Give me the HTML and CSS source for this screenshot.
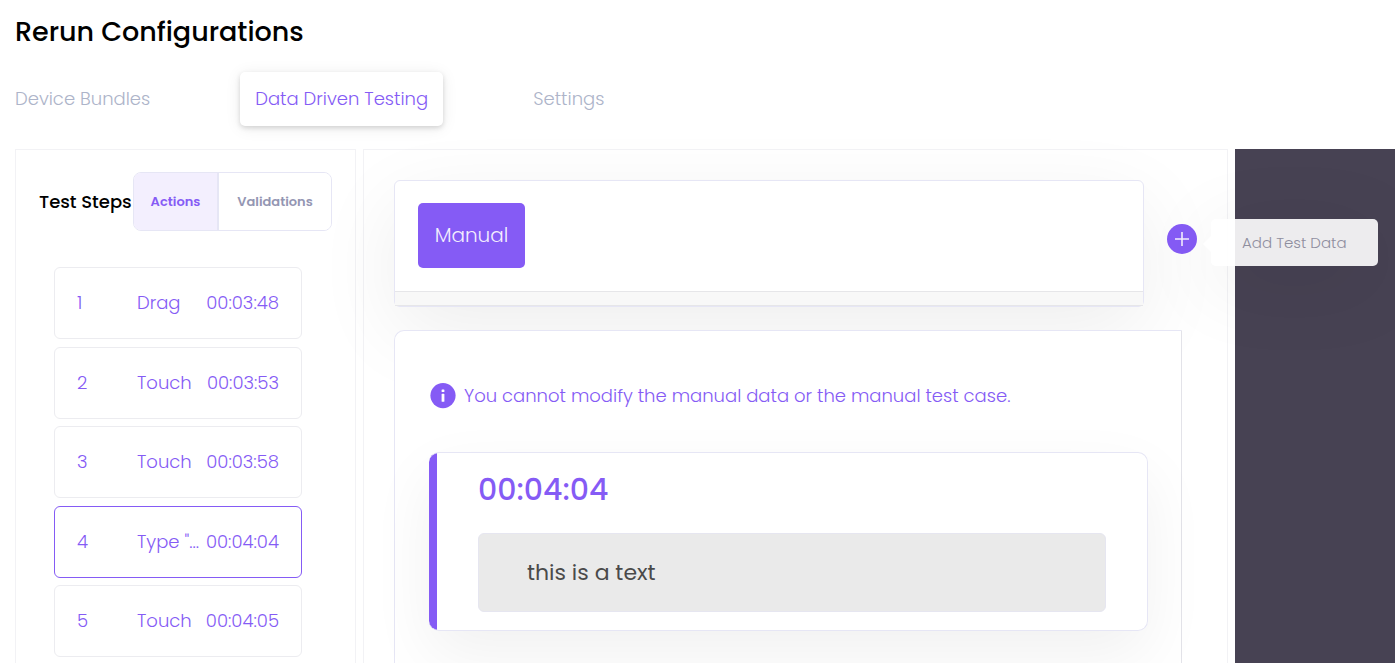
FILE: index.html
```html
<!DOCTYPE html>
<html lang="en">
<head>
<meta charset="utf-8">
<meta name="viewport" content="width=device-width, initial-scale=1">
<title>Rerun Configurations</title>
<link rel="stylesheet" href="styles.css">
</head>
<body>
<div class="app">
  <header class="header">
    <h1 class="title">Rerun Configurations</h1>
    <nav class="tabs">
      <a class="tab tab-bundles" href="#bundles">Device Bundles</a>
      <a class="tab tab-active" href="#data" aria-current="page">Data Driven Testing</a>
      <a class="tab" href="#settings">Settings</a>
    </nav>
  </header>
  <main class="workspace">
    <section class="steps-panel">
      <div class="steps-head">
        <h2 class="steps-title">Test Steps</h2>
        <div class="segmented">
          <button class="segment segment-on" type="button">Actions</button>
          <button class="segment segment-wide" type="button">Validations</button>
        </div>
      </div>
      <div class="step-list">
        <button class="step" type="button"><span>1</span><span>Drag</span><span class="step-time">00:03:48</span></button>
        <button class="step" type="button"><span>2</span><span>Touch</span><span class="step-time">00:03:53</span></button>
        <button class="step" type="button"><span>3</span><span>Touch</span><span class="step-time">00:03:58</span></button>
        <button class="step step-selected" type="button"><span>4</span><span>Type "...</span><span class="step-time">00:04:04</span></button>
        <button class="step" type="button"><span>5</span><span>Touch</span><span class="step-time">00:04:05</span></button>
      </div>
    </section>
    <section class="data-panel">
      <div class="sets-row">
        <div class="sets">
          <div class="sets-items"><button class="set" type="button">Manual</button></div>
          <div class="sets-track"></div>
        </div>
        <div class="add-wrap">
          <button class="add" type="button" aria-label="Add" aria-describedby="add-tip">
            <svg viewBox="0 0 30 30" width="30" height="30" aria-hidden="true"><path d="M15 8v14M8 15h14" fill="none" stroke="#f3eefe" stroke-width="1.6"/></svg>
          </button>
          <div class="tip" id="add-tip" role="tooltip">Add Test Data</div>
        </div>
      </div>
      <div class="details">
        <p class="notice">
          <svg viewBox="0 0 26 26" width="26" height="26" aria-hidden="true"><circle cx="13" cy="12.6" r="12.6" fill="#855bf5"/><rect x="11.6" y="6.5" width="2.8" height="2.6" rx=".6" fill="#fff"/><rect x="11.6" y="10.8" width="2.8" height="8" rx=".6" fill="#fff"/></svg>
          <span>You cannot modify the manual data or the manual test case.</span>
        </p>
        <div class="entry">
          <label class="entry-time" for="entry-text">00:04:04</label>
          <input class="entry-input" id="entry-text" type="text" value="this is a text" readonly>
        </div>
      </div>
    </section>
    <aside class="backdrop"></aside>
  </main>
</div>
</body>
</html>
```
FILE: styles.css
```css
* { box-sizing: border-box; }
body {
  margin: 0;
  background: #fff;
  color: #000;
  font-family: Poppins, Inter, "Liberation Sans", sans-serif;
  font-size: 18px;
  font-weight: 300;
}
button, input { font: inherit; color: inherit; }
h1, h2, p { margin: 0; }
.app { display: flex; flex-direction: column; height: 100vh; overflow: hidden; }
.title { padding: 11px 15px 19px; font-size: 27px; line-height: 42px; font-weight: 500; }
.tabs { display: flex; gap: 75px; margin-bottom: 23px; }
.tab { padding: 13px 15px; line-height: 28px; border-radius: 5px; color: #adb4c9; text-decoration: none; white-space: nowrap; }
.tab-bundles { min-width: 165px; }
.tab-active { min-width: 203px; background: #fff; color: #855bf5; box-shadow: 0 2px 5px rgba(0,0,0,.14), 0 2px 16px rgba(0,0,0,.08); }
.workspace { flex: 1; min-height: 0; display: grid; grid-template-columns: 341px minmax(0, 1fr) 160px; gap: 7px; padding-left: 15px; }
.steps-panel { border: 1px solid #f2f2f5; border-bottom: 0; padding: 22px 23px 0; }
.steps-head { display: flex; align-items: center; justify-content: space-between; }
.steps-title { font-size: 18px; font-weight: 500; white-space: nowrap; }
.segmented { display: flex; border: 1px solid #e6e6f5; border-radius: 8px; overflow: hidden; }
.segment { width: 85px; height: 57px; padding: 0; border: 0; background: #fff; color: #9496b3; font-size: 13px; font-weight: 600; }
.segment-on { background: #f3effe; color: #855bf5; border-right: 2px solid #e6e6f5; }
.segment-wide { width: 112px; }
.step-list { display: grid; align-content: space-between; height: 390px; margin: 36px 30px 0 15px; }
.step { display: grid; grid-template-columns: 60px 62px 1fr; align-items: center; height: 72px; padding: 0 22px 1px; border: 1px solid #ececf0; border-radius: 6px; background: #fff; color: #855bf5; text-align: left; white-space: nowrap; }
.step-time { justify-self: end; }
.step-selected { border-color: #855bf5; }
.data-panel { display: flex; flex-direction: column; min-height: 0; border: 1px solid #f2f2f5; border-bottom: 0; padding: 30px 30px 0; }
.sets-row { display: flex; gap: 23px; margin-bottom: 23px; }
.sets { flex: 1; border: 1px solid #e6e6f5; border-radius: 6px; background: #fff; box-shadow: 0 24px 84px rgba(0,0,0,.07); }
.sets-items { padding: 22px 23px 23px; }
.set { display: block; width: 107px; height: 65px; padding: 0 0 1px; border: 0; border-radius: 5px; background: #855bf5; color: #f3eefe; font-size: 20px; }
.sets-track { height: 15px; border: 1px solid #e6e6e9; border-width: 1px 0; background: #f8f8f8; }
.add-wrap { position: relative; z-index: 2; height: 30px; margin-top: 44px; }
.add { display: block; width: 30px; height: 30px; padding: 0; border: 0; border-radius: 50%; background: #855bf5; }
.add svg { display: block; }
.tip { position: absolute; left: 44px; top: -5px; width: 167px; padding: 12px 0 11px 31px; border-radius: 5px; background: rgba(255,255,255,.9); color: #8f8e9e; font-size: 15px; line-height: 24px; white-space: nowrap; box-shadow: 0 16px 84px rgba(0,0,0,.09); }
.tip::before { content: ""; position: absolute; left: -8px; top: 17px; border: solid transparent; border-width: 8px 8px 8px 0; border-right-color: #fff; }
.details { flex: 1; position: relative; margin-right: 15px; padding: 51px 33px 0 34px; border: 1px solid #e6e6f5; border-right-color: #e3e3e9; border-bottom: 0; border-radius: 10px 0 0 0; background: #fff; }
.notice { display: flex; align-items: center; gap: 8px; padding-left: 1px; color: #855bf5; line-height: 28px; }
.entry { margin-top: 42px; padding: 17px 41px 18px 49px; border: 1px solid #e6e6f5; border-left: 0; border-radius: 10px; background: linear-gradient(to right, #855bf5 8px, #fff 8px); box-shadow: 0 24px 64px rgba(0,0,0,.06); }
.entry-time { display: block; margin-bottom: 23px; color: #855bf5; font-size: 30px; line-height: 40px; font-weight: 500; }
.entry-input { display: block; width: 100%; height: 79px; padding: 0 48px; border: 1px solid #e6e6f0; border-radius: 6px; background: #eaeaea; color: #4a4a4a; font-size: 22px; font-weight: 400; }
.backdrop { background: #474253; }
```
